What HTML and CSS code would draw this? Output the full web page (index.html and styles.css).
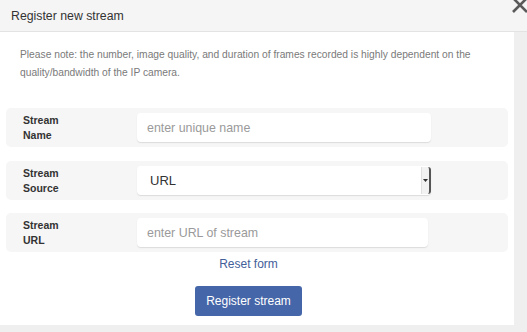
FILE: index.html
```html
<!DOCTYPE html>
<html>
<head>
<meta charset="utf-8">
<link rel="stylesheet" href="styles.css">
</head>
<body>
<div class="modal">
  <div class="modal-header">
    <span class="title">Register new stream</span>
  </div>
  <div class="modal-body">
    <p class="note">Please note: the number, image quality, and duration of frames recorded is highly dependent on the quality/bandwidth of the IP camera.</p>
    <form class="form">
      <div class="row">
        <label class="label">Stream<br>Name</label>
        <input class="input" type="text" placeholder="enter unique name">
      </div>
      <div class="row">
        <label class="label">Stream<br>Source</label>
        <div class="select">
          <span class="select-text">URL</span>
          <span class="select-btn"><svg width="5" height="3" viewBox="0 0 5 3"><path d="M0 0h5L2.5 3z" fill="#333"/></svg></span>
        </div>
      </div>
      <div class="row">
        <label class="label">Stream<br>URL</label>
        <input class="input input-url" type="text" placeholder="enter URL of stream">
      </div>
      <div class="actions">
        <a class="reset" href="#">Reset form</a>
        <button class="btn" type="button">Register stream</button>
      </div>
    </form>
  </div>
</div>
<svg class="close" width="20" height="20" viewBox="0 0 20 20"><path d="M3 3L17 17M17 3L3 17" stroke="#5a5a5a" stroke-width="2.6" fill="none"/></svg>
</body>
</html>
```
FILE: styles.css
```css
html, body {
  margin: 0;
  padding: 0;
}
body {
  width: 527px;
  height: 332px;
  background: #efefef;
  font-family: "Liberation Sans", Arial, sans-serif;
  position: relative;
  overflow: hidden;
}
.modal {
  width: 514px;
  height: 325px;
  background: #fff;
  display: flex;
  flex-direction: column;
}
.modal-header {
  height: 32px;
  box-sizing: border-box;
  background: #f5f5f5;
  border-bottom: 1px solid #e3e3e3;
  display: flex;
  align-items: center;
  padding-left: 11px;
  margin-right: -13px;
}
.title {
  font-size: 12.3px;
  color: #333;
}
.close {
  position: absolute;
  left: 510px;
  top: -5px;
}
.modal-body {
  padding: 0;
}
.note {
  margin: 14px 0 0 20px;
  font-size: 10.25px;
  line-height: 18px;
  color: #7a7a7a;
  width: 470px;
}
.form {
  margin-top: 26px;
  display: flex;
  flex-direction: column;
}
.row {
  margin-left: 6px;
  width: 502px;
  height: 39px;
  box-sizing: border-box;
  background: #f6f6f6;
  border-radius: 5px;
  display: flex;
  align-items: center;
  margin-bottom: 14px;
}
.row:nth-child(2) {
  margin-bottom: 13px;
}
.label {
  width: 114px;
  padding-left: 17px;
  font-size: 10.5px;
  font-weight: bold;
  line-height: 15px;
  color: #333;
}
.input {
  width: 294px;
  height: 29px;
  box-sizing: border-box;
  border: none;
  border-radius: 4px;
  background: #fff;
  box-shadow: 0 1px 1px #dcdcdc;
  padding: 0 10px;
  font-family: "Liberation Sans", Arial, sans-serif;
  font-size: 12.4px;
  color: #333;
  outline: none;
}
.input::placeholder {
  color: #9a9a9a;
}
.input-url {
  width: 291px;
}
.select {
  width: 294px;
  height: 29px;
  box-sizing: border-box;
  border-radius: 4px;
  background: #fff;
  box-shadow: 0 1px 1px #dcdcdc;
  display: flex;
  align-items: center;
  justify-content: space-between;
}
.select-text {
  padding-left: 13px;
  font-size: 13px;
  color: #333;
}
.select-btn {
  width: 10px;
  height: 27px;
  box-sizing: border-box;
  border-right: 2px solid #555;
  border-left: 1px solid #e0e0e0;
  border-radius: 0 3px 3px 0;
  background: #f2f2f2;
  display: flex;
  align-items: center;
  justify-content: center;
}
.actions {
  width: 497px;
  margin-top: -10px;
  display: flex;
  flex-direction: column;
  align-items: center;
}
.reset {
  font-size: 12px;
  color: #43609a;
  text-decoration: none;
  line-height: 16px;
}
.btn {
  margin-top: 14px;
  width: 107px;
  height: 30px;
  border: none;
  border-radius: 3px;
  background: #4566a8;
  color: #fff;
  font-family: "Liberation Sans", Arial, sans-serif;
  font-size: 12px;
}
```
